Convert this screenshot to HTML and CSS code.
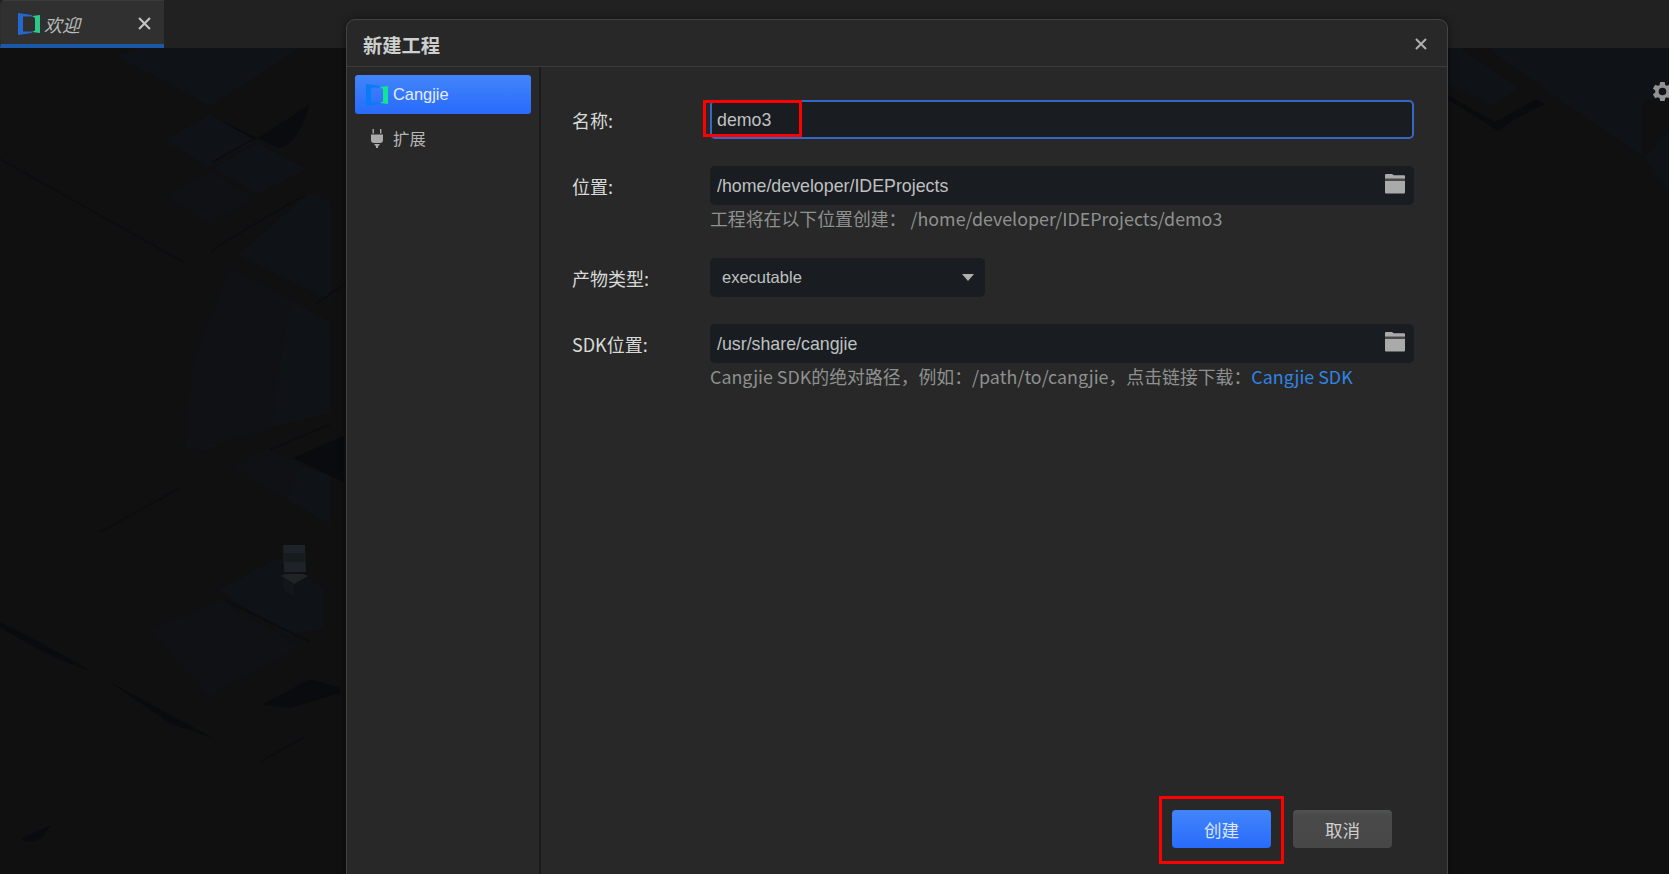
FILE: index.html
```html
<!DOCTYPE html>
<html lang="zh-CN">
<head>
    <meta charset="UTF-8">
    <meta name="viewport" content="width=device-width, initial-scale=1.0">
    <title>新建工程</title>
    <link rel="stylesheet" href="styles.css">
</head>
<body>
<svg class="backdrop" viewBox="0 0 1669 874" aria-hidden="true">
    <g fill="#0f1216">
        <path d="M117 56l23-8h160l-90 58z"/>
        <path d="M164 141l45-27 47 27-46 26z"/>
        <path d="M213 168l45-25 48 26-48 25z"/>
        <path d="M238 255l71-62 22 8v100z"/>
        <path d="M230 267l100 55v90l-80 20-50 20z"/>
        <path d="M287 478l15-12 28 10v48l-50-28z"/>
        <path d="M218 590l60-32 45 30v40l-35 8z"/>
    </g>
    <g fill="#101115">
        <path d="M166 196l44-25 43 27-43 27z"/>
        <path d="M230 267l60 33-20 130-85 20 8-90z"/>
        <path d="M232 468l35-20 33 15-14 36z"/>
        <path d="M150 630l70-30 80 46-92 51z"/>
    </g>
    <g fill="#090b0f">
        <path d="M220 120l35 20 54-35q-12 42-31 43z"/>
        <path d="M0 622q45 22 90 49q-40-13-90-44z"/>
        <path d="M108 681l105 57-42-14z"/>
        <path d="M21 839l30-14-10 14-12 3z"/>
        <path d="M262 705l48-26 30 9v5l-50 15z"/>
        <path d="M293 458l51-22v46z"/>
    </g>
    <g fill="none" stroke="#0b0d10" stroke-width="2">
        <path d="M0 159l185 104M211 252q10-9 94-57M213 162l44-25M314 305l31-21M100 532l80-44M270 450l60-26M225 600l85 42M260 762l46-26"/>
    </g>
    <!-- column on the tile -->
    <g>
        <path fill="#1d2328" d="M283 545h22l1 27h-22z"/>
        <path fill="#161d1c" d="M283 553h22v9h-22z"/>
        <path fill="#202427" d="M281 576l4-2h18l5 2-14 8z"/>
        <path fill="#11171a" d="M283 579l11 6v12l-10-7z"/>
    </g>
    <g fill="#0f1318">
        <path d="M1460 48l59 40-25 17-45-20V48z"/>
        <path d="M1488 48h181v132l-26-24-103-70z"/>
        <path d="M1645 157l24-20v55z"/>
    </g>
    <path fill="#090b0f" d="M1449 96l46 26 42-23 8 5-30 15-17 12-49-31z"/>
    <path fill="#101010" d="M1646 99h23v32l-24 25h-3v-53z"/>
</svg>

<svg class="symbols" aria-hidden="true">
    <symbol id="logo" viewBox="0 0 22 22">
        <path class="logo-left" d="M0 0L14 2v1.500H5v15h9v1.500L0 22z"/>
        <path class="logo-right" d="M14 3l8-1v18l-8-1 3-1.500V5z"/>
    </symbol>
    <symbol id="folder" viewBox="0 0 20 20">
        <path fill="#aaa" d="M0 5V1.200Q0 0 1 0h6l1.800 1.200H19q1 0 1 1V5z"/>
        <path fill="#4b4848" d="M0 4.500h20V7H0z"/>
        <path fill="#aaa" d="M0 7h20v11.500q0 1-1 1H1q-1 0-1-1z"/>
    </symbol>
    <symbol id="cross" viewBox="0 0 12 12">
        <path d="M1 1l10 10M11 1L1 11" fill="none" stroke="currentColor" stroke-width="2"/>
    </symbol>
</svg>

<div class="tab-bar">
    <div class="tab">
        <svg class="logo"><use href="#logo"/></svg>
        <span class="tab-title">欢迎</span>
        <svg class="tab-close"><use href="#cross"/></svg>
    </div>
</div>

<svg class="gear" viewBox="0 0 24 24">
    <path fill="#929292" fill-rule="evenodd" d="M19.400 13c.1-.7.1-1.300 0-2l2.100-1.600c.2-.2.3-.4.1-.7l-2-3.400c-.1-.2-.4-.3-.6-.2l-2.500 1c-.5-.4-1.100-.7-1.700-1l-.4-2.600c0-.3-.2-.5-.5-.5h-4c-.3 0-.5.2-.5.5L9 5.100c-.6.300-1.200.6-1.700 1l-2.500-1c-.2-.1-.5 0-.6.2l-2 3.400c-.1.3 0 .5.1.7L4.500 11c-.1.700-.1 1.300 0 2l-2.200 1.600c-.1.2-.2.400-.1.700l2 3.400c.1.200.4.300.6.200l2.500-1c.5.4 1.100.7 1.700 1l.4 2.600c0 .3.200.5.500.5h4c.3 0 .5-.2.500-.5l.4-2.600c.6-.3 1.200-.6 1.700-1l2.500 1c.2.1.5 0 .6-.2l2-3.400c.2-.3.1-.5-.1-.7zM12 16a4 4 0 1 1 0-8 4 4 0 0 1 0 8z"/>
</svg>

<div class="dialog">
    <div class="dialog-header">
        <h1>新建工程</h1>
        <svg class="dialog-close"><use href="#cross"/></svg>
    </div>
    <div class="dialog-body">
        <div class="sidebar">
            <div class="sidebar-item active">
                <svg class="logo"><use href="#logo"/></svg>
                <span>Cangjie</span>
            </div>
            <div class="sidebar-item">
                <svg class="plug" viewBox="0 0 12 20">
                    <path fill="#aaa" d="M1.500 0h1.400v4.500H1.500zM9 0h1.400v4.500H9zM0 5.500h12V11q0 3-3 3H3q-3 0-3-3zM3 15h6l-2 2.500V19H5v-1.500z"/>
                </svg>
                <span>扩展</span>
            </div>
        </div>
        <form class="content">
            <div class="form-row">
                <label for="name">名称:</label>
                <div class="field">
                    <input type="text" id="name" class="form-control focused" value="demo3">
                    <div class="mark mark-name"></div>
                </div>
            </div>
            <div class="form-row location-row">
                <label for="location">位置:</label>
                <div class="field">
                    <div class="form-control path-control">
                        <input type="text" id="location" value="/home/developer/IDEProjects">
                        <svg class="folder"><use href="#folder"/></svg>
                    </div>
                    <p class="hint">工程将在以下位置创建： /home/developer/IDEProjects/demo3</p>
                </div>
            </div>
            <div class="form-row">
                <label>产物类型:</label>
                <div class="field">
                    <div class="form-control select">
                        <span>executable</span>
                        <span class="arrow"></span>
                    </div>
                </div>
            </div>
            <div class="form-row">
                <label for="sdk">SDK位置:</label>
                <div class="field">
                    <div class="form-control path-control">
                        <input type="text" id="sdk" value="/usr/share/cangjie">
                        <svg class="folder"><use href="#folder"/></svg>
                    </div>
                    <p class="hint">Cangjie SDK的绝对路径，例如：/path/to/cangjie，点击链接下载：<a href="#">Cangjie SDK</a></p>
                </div>
            </div>
            <div class="buttons">
                <div class="button-wrap">
                    <button type="button" class="primary">创建</button>
                    <div class="mark mark-create"></div>
                </div>
                <button type="button">取消</button>
            </div>
        </form>
    </div>
</div>
</body>
</html>
```
FILE: styles.css
```css
* {
    box-sizing: border-box;
}

body {
    margin: 0;
    height: 874px;
    overflow: hidden;
    position: relative;
    background-color: #101010;
    color: #d6d6d6;
    font-family: "Noto Sans CJK SC", sans-serif;
}

.backdrop {
    position: absolute;
    left: 0;
    top: 0;
    width: 1669px;
    height: 874px;
}

.backdrop path {
    filter: blur(0.6px);
}

.symbols {
    position: absolute;
    width: 0;
    height: 0;
}

.tab-bar {
    position: relative;
    height: 48px;
    background-color: #212121;
}

.tab {
    display: flex;
    align-items: center;
    width: 164px;
    height: 48px;
    padding: 2px 13px 0 17px;
    border-top: 1px solid #3a3a3a;
    border-left: 1px solid #2c2c2c;
    border-bottom: 4px solid #1d57a8;
    border-top-left-radius: 5px;
    background-color: #303030;
}

.logo {
    width: 22px;
    height: 22px;
    flex: none;
    --left: #2367cf;
    --right: #2cc98a;
}

.logo-left {
    fill: var(--left);
}

.logo-right {
    fill: var(--right);
}

.tab-title {
    margin-left: 4px;
    font-size: 18px;
    font-style: italic;
    line-height: 24px;
    color: #b9bcba;
}

.tab-close {
    width: 13px;
    height: 13px;
    margin-left: auto;
    color: #c4c4c4;
}

.gear {
    position: absolute;
    left: 1651px;
    top: 80px;
    width: 23px;
    height: 23px;
}

.dialog {
    position: absolute;
    left: 346px;
    top: 19px;
    width: 1102px;
    height: 870px;
    display: flex;
    flex-direction: column;
    border: 1px solid #434444;
    border-radius: 9px;
    background-color: #282828;
    box-shadow: 0 0 8px rgba(0, 0, 0, 0.5);
}

.dialog-header {
    display: flex;
    align-items: center;
    justify-content: space-between;
    height: 47px;
    padding: 2px 20px 0 16px;
    border-bottom: 1px solid #3b3b3b;
}

.dialog-header h1 {
    margin: 1px 0 0;
    font-size: 19.3px;
    font-weight: bold;
    line-height: 28px;
    color: #cdd0ce;
}

.dialog-close {
    width: 12px;
    height: 12px;
    color: #b0b0b0;
}

.dialog-body {
    display: flex;
    flex: 1;
}

.sidebar {
    width: 194px;
    padding: 8px;
    border-right: 2px solid #1b1b1f;
}

.sidebar-item {
    display: flex;
    align-items: center;
    height: 39px;
    margin-bottom: 4px;
    padding-left: 11px;
    border-radius: 3px;
    font-size: 16.400px;
    color: #b4b6b5;
}

.sidebar-item span {
    margin-left: 5px;
}

.sidebar-item.active {
    background: linear-gradient(#4285fa, #286bfb);
    color: #e6edfa;
    font-family: "Liberation Sans", sans-serif;
}

.active .logo {
    --left: #087bf8;
    --right: #0ee596;
}

.plug {
    width: 12px;
    height: 20px;
    margin: 2px 5px 0;
}

.content {
    position: relative;
    flex: 1;
    padding: 33px 33px 0 31px;
}

.form-row {
    display: flex;
    height: 66px;
}

.location-row {
    height: 92px;
}

.form-row label {
    width: 138px;
    padding-top: 7px;
    font-size: 18px;
    line-height: 26px;
    color: #d7dad8;
}

.field {
    position: relative;
    flex: 1;
}

.form-control {
    display: flex;
    align-items: center;
    width: 100%;
    height: 39px;
    padding: 0 7px;
    border: 0;
    border-radius: 5px;
    background-color: #191c20;
    color: #bfc1c0;
    font-family: "Liberation Sans", sans-serif;
    font-size: 17.800px;
    outline: none;
}

.form-control.focused {
    padding: 2px 5px 0;
    border: 2px solid #3568c4;
}

.path-control input {
    flex: 1;
    padding: 2px 0 0;
    border: 0;
    background: none;
    color: inherit;
    font: inherit;
    outline: none;
}

.folder {
    width: 20px;
    height: 20px;
    margin: 0 2px 3px 0;
}

.hint {
    margin: 0;
    font-size: 17.880px;
    line-height: 26px;
    white-space: nowrap;
    color: #8e9190;
}

.hint a {
    color: #3184e4;
    text-decoration: none;
}

.select {
    width: 275px;
    justify-content: space-between;
    padding: 0 11px 0 12px;
    font-size: 16.500px;
}

.arrow {
    border: 6px solid transparent;
    border-top: 7px solid #b0b0b0;
    border-bottom: 0;
}

.buttons {
    position: absolute;
    right: 55px;
    top: 743px;
    display: flex;
    gap: 22px;
}

.button-wrap {
    position: relative;
}

.buttons button {
    display: block;
    width: 99px;
    height: 38px;
    padding: 2px 0 0;
    border: 0;
    border-radius: 4px;
    background: linear-gradient(#505454, #494949 15%, #474747);
    color: #cfcfcf;
    font-family: inherit;
    font-size: 17.600px;
    line-height: 36px;
}

.buttons .primary {
    background: linear-gradient(#4285fa, #286bfb);
    color: #dce6f9;
}

/* red highlight frames */
.mark {
    position: absolute;
    border: 3px solid #fe0000;
    pointer-events: none;
}

.mark-name {
    left: -7px;
    top: 0;
    width: 99px;
    height: 37px;
}

.mark-create {
    left: -13px;
    top: -14px;
    width: 125px;
    height: 68px;
}
```
